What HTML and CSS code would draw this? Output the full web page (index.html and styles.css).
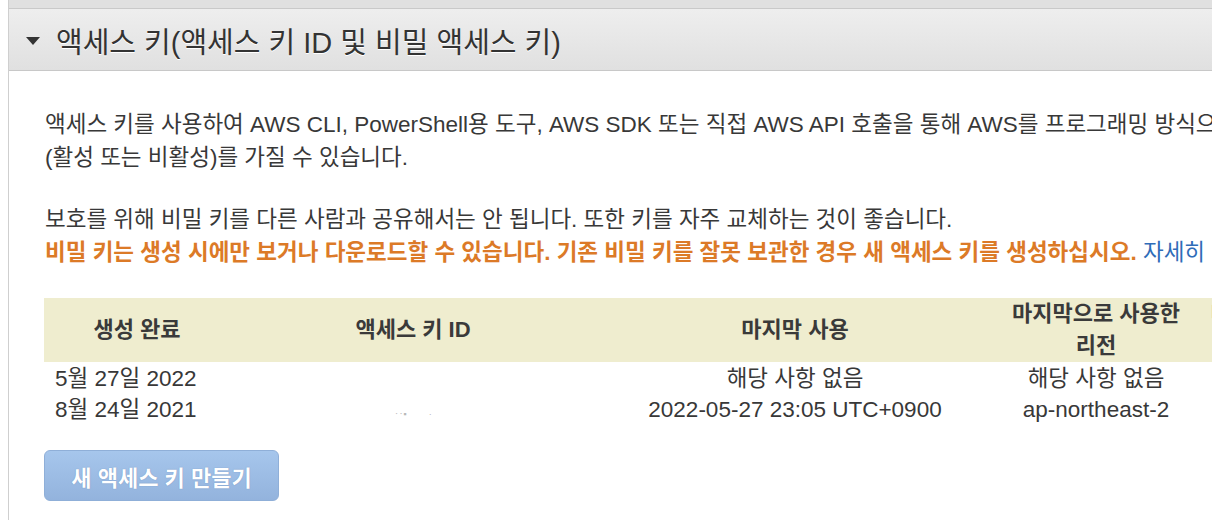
FILE: index.html
```html
<!DOCTYPE html>
<html lang="ko">
<head>
    <meta charset="UTF-8">
    <meta name="viewport" content="width=device-width, initial-scale=1.0">
    <title>액세스 키</title>
    <link rel="stylesheet" href="styles.css">
</head>
<body>

    <div class="panel">
        <div class="top-band"></div>

        <div class="section-header">
            <span class="caret"></span>
            <h2 class="section-title">액세스 키(액세스 키 ID 및 비밀 액세스 키)</h2>
        </div>

        <div class="section-body">
            <p class="intro">액세스 키를 사용하여 AWS CLI, PowerShell용 도구, AWS SDK 또는 직접 AWS API 호출을 통해 AWS를 프로그래밍 방식으로 호출할 수 있습니다. 한 번에 최대 두 개의 액세스 키<br>(활성 또는 비활성)를 가질 수 있습니다.</p>

            <p class="intro">
                보호를 위해 비밀 키를 다른 사람과 공유해서는 안 됩니다. 또한 키를 자주 교체하는 것이 좋습니다.<br>
                <span class="warning">비밀 키는 생성 시에만 보거나 다운로드할 수 있습니다. 기존 비밀 키를 잘못 보관한 경우 새 액세스 키를 생성하십시오.</span>
                <a href="#" class="more-link">자세히 알아보기</a>
            </p>

            <table class="keys-table">
                <thead>
                    <tr>
                        <th class="col-created">생성 완료</th>
                        <th class="col-id">액세스 키 ID</th>
                        <th class="col-last">마지막 사용</th>
                        <th class="col-region">마지막으로 사용한 리전</th>
                        <th class="col-service">마지막으로 사용한 서비스</th>
                    </tr>
                </thead>
                <tbody>
                    <tr>
                        <td class="cell-date">5월 27일 2022</td>
                        <td></td>
                        <td>해당 사항 없음</td>
                        <td>해당 사항 없음</td>
                        <td>해당 사항 없음</td>
                    </tr>
                    <tr>
                        <td class="cell-date">8월 24일 2021</td>
                        <td><span class="redacted">‥▪ &nbsp; &nbsp; &nbsp; &nbsp; ·</span></td>
                        <td>2022-05-27 23:05 UTC+0900</td>
                        <td>ap-northeast-2</td>
                        <td>iam</td>
                    </tr>
                </tbody>
            </table>

            <button class="create-btn" type="button">새 액세스 키 만들기</button>
        </div>
    </div>

</body>
</html>
```

FILE: styles.css
```css
body, html {
    margin: 0;
    padding: 0;
    height: 100%;
    overflow: hidden;
    background: #ffffff;
    font-family: "Liberation Sans", "Noto Sans CJK KR", sans-serif;
    color: #383838;
}

.panel {
    margin-left: 8px;
    border-left: 1px solid #cfcfcf;
    min-height: 100%;
    width: 1500px;
}

.top-band {
    height: 8px;
    background-color: #e0e0e0;
    border-bottom: 1px solid #c9c9c9;
}

.section-header {
    display: flex;
    align-items: center;
    height: 61px;
    padding-left: 17px;
    background: linear-gradient(to bottom, #eeeeee, #e0e0e0);
    border-bottom: 1px solid #c8c8c8;
}

.caret {
    width: 0;
    height: 0;
    border-left: 7px solid transparent;
    border-right: 7px solid transparent;
    border-top: 8px solid #333333;
    margin-right: 16px;
    margin-top: 2px;
}

.section-title {
    margin: 0;
    font-size: 29px;
    font-weight: normal;
    color: #333333;
    text-shadow: 0 1px 0 #ffffff;
}

.section-body {
    padding: 37px 0 0 36px;
}

.intro {
    margin: 0 0 29px 0;
    font-size: 22.5px;
    line-height: 33px;
    white-space: nowrap;
}

.warning {
    color: #dc7a27;
    font-weight: bold;
}

.more-link {
    color: #2f6cb8;
    text-decoration: none;
}

.keys-table {
    border-collapse: collapse;
    margin-left: -1px;
}

.keys-table th {
    background-color: #efedcf;
    height: 61px;
    padding: 0 10px;
    font-size: 22px;
    font-weight: bold;
    color: #3a3a3a;
    line-height: 32px;
    text-align: center;
}

.keys-table td {
    padding: 2px 10px 0 10px;
    font-size: 22.5px;
    line-height: 29px;
    text-align: center;
    white-space: nowrap;
}

.keys-table td.cell-date {
    text-align: left;
    padding-left: 11px;
}

.col-created { width: 166px; }
.col-id { width: 346px; }
.col-last { width: 378px; }
.col-region { width: 184px; }
.col-service { width: 220px; }

.redacted {
    font-size: 9px;
    line-height: 0;
    color: #b8b8b8;
}

.create-btn {
    display: block;
    margin-top: 26px;
    margin-left: -1px;
    width: 235px;
    height: 51px;
    padding: 0;
    border: 1px solid #8fafd8;
    border-radius: 6px;
    background: linear-gradient(to bottom, #a6c6ec, #93b3dd);
    color: #ffffff;
    font-family: "Liberation Sans", "Noto Sans CJK KR", sans-serif;
    font-size: 22px;
    font-weight: bold;
    text-shadow: 0 0 1px rgba(70, 100, 150, 0.6);
    cursor: default;
}
```
